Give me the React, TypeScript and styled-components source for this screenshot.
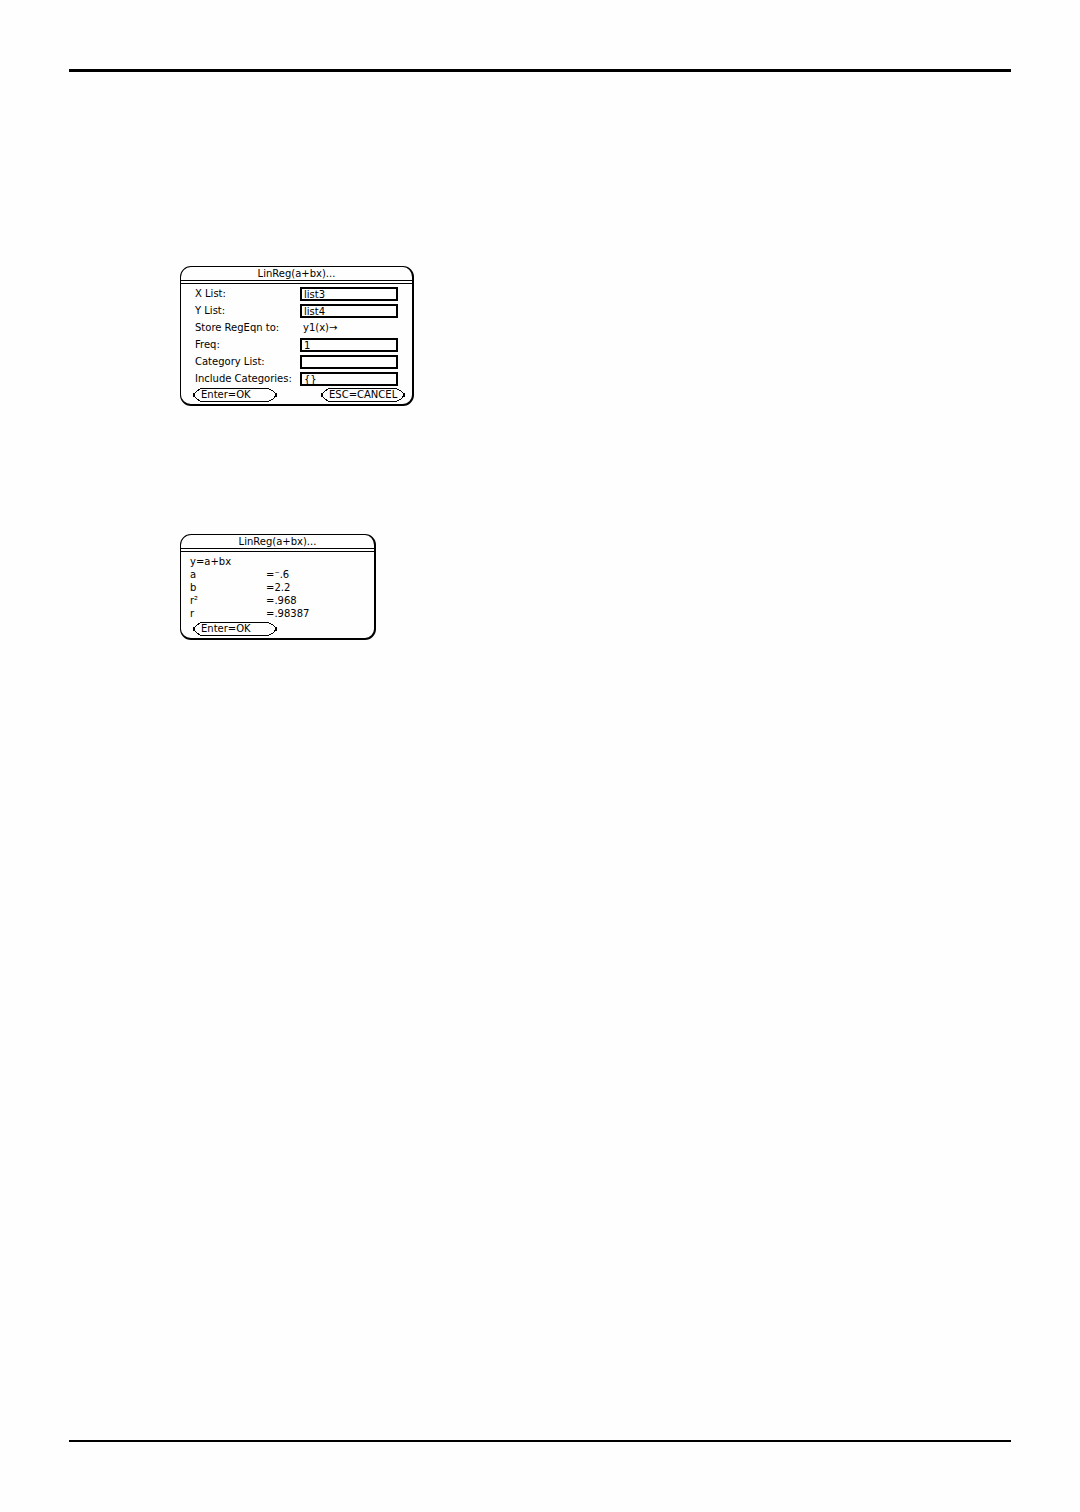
import React from "react";
import styled, { createGlobalStyle } from "styled-components";

const INK = "#000";

const GlobalStyle = createGlobalStyle`
  *, *::before, *::after { box-sizing: border-box; }
  body { margin: 0; background: #fefefe; color: ${INK}; }
`;

const Page = styled.main`
  display: flex;
  flex-direction: column;
  min-height: 100vh;
  padding: 69px 69px 70px;
  font: 10px/12px "DejaVu Sans", sans-serif;
`;

const Rule = styled.hr<{ $weight: number }>`
  width: 100%;
  height: ${(p) => p.$weight}px;
  margin: 0;
  border: 0;
  background: ${INK};
`;

const Body = styled.div`
  flex: 1;
  display: flex;
  flex-direction: column;
  align-items: flex-start;
  gap: 128px;
  padding: 194px 0 0 111px;
`;

const Dialog = styled.section<{ $width: number }>`
  display: flex;
  flex-direction: column;
  width: ${(p) => p.$width}px;
  max-width: 100%;
  border: solid ${INK};
  border-width: 1px 2px 2px 1px;
  border-radius: 11px;
  background: #fefefe;
`;

const Title = styled.h2`
  height: 17px;
  margin: 0;
  border-bottom: 4px double ${INK};
  font-size: 10px;
  line-height: 14px;
  font-weight: 400;
  text-align: center;
`;

const Form = styled.form`
  display: flex;
  flex-direction: column;
`;

const Fields = styled.div`
  display: grid;
  grid-template-columns: 105px 98px;
  row-gap: 3px;
  padding: 3px 0 0 14px;
`;

const Label = styled.label`
  line-height: 14px;
  white-space: nowrap;
`;

const Field = styled.input`
  width: 100%;
  height: 14px;
  padding: 0 2px;
  border: 2px solid ${INK};
  border-radius: 0;
  background: #fefefe;
  color: ${INK};
  font: inherit;
  line-height: 10px;
`;

const Picker = styled.select`
  appearance: none;
  width: 100%;
  height: 14px;
  padding: 0 3px;
  border: 0;
  background: transparent;
  color: ${INK};
  font: inherit;
`;

const Actions = styled.div`
  display: flex;
  justify-content: space-between;
  padding: 2px 6px 2px 11px;
`;

const KeyButton = styled.button`
  position: relative;
  width: 86px;
  height: 14px;
  padding: 0 9px;
  border: 0;
  background: transparent;
  color: ${INK};
  font: inherit;
  text-align: left;
  white-space: nowrap;
`;

const Outline = styled.svg`
  position: absolute;
  inset: 0;
  width: 100%;
  height: 100%;
`;

const Results = styled.table`
  margin: 3px 0 0 9px;
  border-collapse: collapse;
  line-height: 13px;
`;

const Equation = styled.caption`
  text-align: left;
`;

const Name = styled.th`
  width: 76px;
  height: 13px;
  padding: 0;
  font-weight: 400;
  text-align: left;
`;

const Value = styled.td`
  height: 13px;
  padding: 0;
`;

function Key({ children }: { children: string }) {
  return (
    <KeyButton type="button">
      <Outline viewBox="0 0 86 14" fill="none" stroke={INK} shapeRendering="crispEdges" aria-hidden="true">
        <path d="M9 .5H76L81 3L84.5 7L81 11L76 13.5H9L5 11L1.5 7L5 3Z" />
        <path d="M2 5V9M84 5V9" strokeWidth="2" />
      </Outline>
      {children}
    </KeyButton>
  );
}

const inputs = [
  { id: "x-list", label: "X List:", value: "list3" },
  { id: "y-list", label: "Y List:", value: "list4" },
  { id: "equation", label: "Store RegEqn to:", value: "y1(x)→", picker: true },
  { id: "freq", label: "Freq:", value: "1" },
  { id: "category", label: "Category List:", value: "" },
  { id: "include", label: "Include Categories:", value: "{}" },
];

const results = [
  { name: "a", value: "=⁻.6" },
  { name: "b", value: "=2.2" },
  { name: "r²", value: "=.968" },
  { name: "r", value: "=.98387" },
];

export default function App() {
  return (
    <>
      <GlobalStyle />
      <Page>
        <Rule $weight={3} />
        <Body>
          <Dialog $width={234}>
            <Title>LinReg(a+bx)...</Title>
            <Form>
              <Fields>
                {inputs.map((f) => (
                  <React.Fragment key={f.id}>
                    <Label htmlFor={f.id}>{f.label}</Label>
                    {f.picker ? (
                      <Picker id={f.id}>
                        <option>{f.value}</option>
                      </Picker>
                    ) : (
                      <Field id={f.id} defaultValue={f.value} />
                    )}
                  </React.Fragment>
                ))}
              </Fields>
              <Actions>
                <Key>Enter=OK</Key>
                <Key>ESC=CANCEL</Key>
              </Actions>
            </Form>
          </Dialog>
          <Dialog $width={196}>
            <Title>LinReg(a+bx)...</Title>
            <Results>
              <Equation>y=a+bx</Equation>
              <tbody>
                {results.map((r) => (
                  <tr key={r.name}>
                    <Name scope="row">{r.name}</Name>
                    <Value>{r.value}</Value>
                  </tr>
                ))}
              </tbody>
            </Results>
            <Actions>
              <Key>Enter=OK</Key>
            </Actions>
          </Dialog>
        </Body>
        <Rule $weight={2} />
      </Page>
    </>
  );
}
